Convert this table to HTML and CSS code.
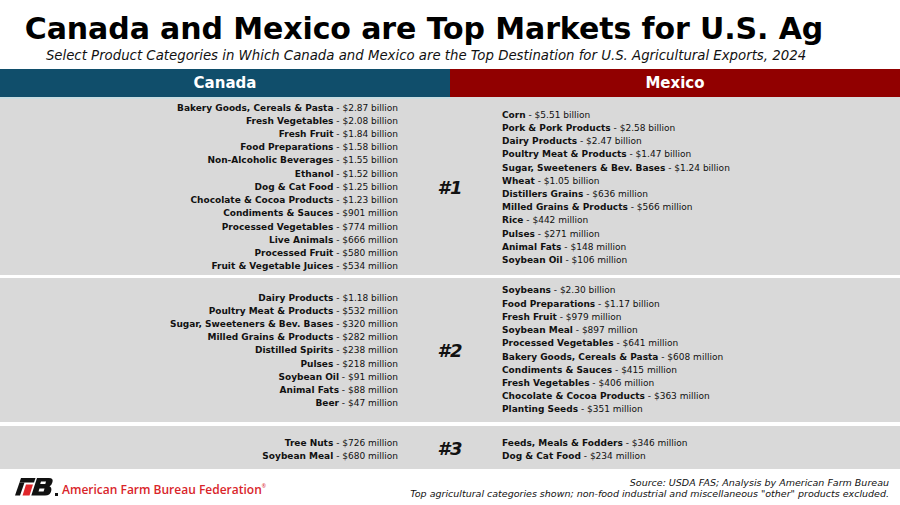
FILE: index.html
```html
<!DOCTYPE html>
<html>
<head>
<meta charset="utf-8">
<link rel="stylesheet" href="styles.css">
</head>
<body>
<div class="page">
  <h1 class="title">Canada and Mexico are Top Markets for U.S. Ag</h1>
  <p class="subtitle">Select Product Categories in Which Canada and Mexico are the Top Destination for U.S. Agricultural Exports, 2024</p>
  <div class="header">
    <div class="hcell canada">Canada</div>
    <div class="hcell mexico">Mexico</div>
  </div>
  <div class="sections">
    <div class="sec sec1">
      <ul class="col left">
        <li><b>Bakery Goods, Cereals &amp; Pasta</b> - $2.87 billion</li>
        <li><b>Fresh Vegetables</b> - $2.08 billion</li>
        <li><b>Fresh Fruit</b> - $1.84 billion</li>
        <li><b>Food Preparations</b> - $1.58 billion</li>
        <li><b>Non-Alcoholic Beverages</b> - $1.55 billion</li>
        <li><b>Ethanol</b> - $1.52 billion</li>
        <li><b>Dog &amp; Cat Food</b> - $1.25 billion</li>
        <li><b>Chocolate &amp; Cocoa Products</b> - $1.23 billion</li>
        <li><b>Condiments &amp; Sauces</b> - $901 million</li>
        <li><b>Processed Vegetables</b> - $774 million</li>
        <li><b>Live Animals</b> - $666 million</li>
        <li><b>Processed Fruit</b> - $580 million</li>
        <li><b>Fruit &amp; Vegetable Juices</b> - $534 million</li>
      </ul>
      <div class="rank">#1</div>
      <ul class="col right">
        <li><b>Corn</b> - $5.51 billion</li>
        <li><b>Pork &amp; Pork Products</b> - $2.58 billion</li>
        <li><b>Dairy Products</b> - $2.47 billion</li>
        <li><b>Poultry Meat &amp; Products</b> - $1.47 billion</li>
        <li><b>Sugar, Sweeteners &amp; Bev. Bases</b> - $1.24 billion</li>
        <li><b>Wheat</b> - $1.05 billion</li>
        <li><b>Distillers Grains</b> - $636 million</li>
        <li><b>Milled Grains &amp; Products</b> - $566 million</li>
        <li><b>Rice</b> - $442 million</li>
        <li><b>Pulses</b> - $271 million</li>
        <li><b>Animal Fats</b> - $148 million</li>
        <li><b>Soybean Oil</b> - $106 million</li>
      </ul>
    </div>
    <div class="sec sec2">
      <ul class="col left">
        <li><b>Dairy Products</b> - $1.18 billion</li>
        <li><b>Poultry Meat &amp; Products</b> - $532 million</li>
        <li><b>Sugar, Sweeteners &amp; Bev. Bases</b> - $320 million</li>
        <li><b>Milled Grains &amp; Products</b> - $282 million</li>
        <li><b>Distilled Spirits</b> - $238 million</li>
        <li><b>Pulses</b> - $218 million</li>
        <li><b>Soybean Oil</b> - $91 million</li>
        <li><b>Animal Fats</b> - $88 million</li>
        <li><b>Beer</b> - $47 million</li>
      </ul>
      <div class="rank">#2</div>
      <ul class="col right">
        <li><b>Soybeans</b> - $2.30 billion</li>
        <li><b>Food Preparations</b> - $1.17 billion</li>
        <li><b>Fresh Fruit</b> - $979 million</li>
        <li><b>Soybean Meal</b> - $897 million</li>
        <li><b>Processed Vegetables</b> - $641 million</li>
        <li><b>Bakery Goods, Cereals &amp; Pasta</b> - $608 million</li>
        <li><b>Condiments &amp; Sauces</b> - $415 million</li>
        <li><b>Fresh Vegetables</b> - $406 million</li>
        <li><b>Chocolate &amp; Cocoa Products</b> - $363 million</li>
        <li><b>Planting Seeds</b> - $351 million</li>
      </ul>
    </div>
    <div class="sec sec3">
      <ul class="col left">
        <li><b>Tree Nuts</b> - $726 million</li>
        <li><b>Soybean Meal</b> - $680 million</li>
      </ul>
      <div class="rank">#3</div>
      <ul class="col right">
        <li><b>Feeds, Meals &amp; Fodders</b> - $346 million</li>
        <li><b>Dog &amp; Cat Food</b> - $234 million</li>
      </ul>
    </div>
  </div>
  <footer class="footer">
    <div class="brand">
      <svg class="logo" viewBox="0 0 40 20" width="40" height="20" aria-hidden="true">
        <polygon points="7,1 21.5,1 20,5.5 5.5,5.5" fill="#111"/>
        <polygon points="5.5,5.5 10.5,5.5 6,18.5 1,18.5" fill="#111"/>
        <polygon points="12,7.5 19,7.5 15.5,18.5 8.5,18.5" fill="#e0262b"/>
        <path d="M23 1 H35 Q39.5 1 38.5 5 Q37.8 8 35.5 9.2 Q38 10.5 37.2 14 Q36.2 18.5 31 18.5 H17.3 Z" fill="#111"/>
        <polygon points="27,4.5 32,4.5 31.3,7 26.2,7" fill="#fff"/>
        <polygon points="25.5,11.5 30.5,11.5 29.6,14.5 24.5,14.5" fill="#fff"/>
      </svg>
      <span class="dot"></span>
      <span class="afbf">American Farm Bureau Federation<sup>®</sup></span>
    </div>
    <div class="notes">
      <p>Source: USDA FAS; Analysis by American Farm Bureau</p>
      <p>Top agricultural categories shown; non-food industrial and miscellaneous "other" products excluded.</p>
    </div>
  </footer>
</div>
</body>
</html>
```

FILE: styles.css
```css
html, body {
  margin: 0;
  padding: 0;
  background: #ffffff;
}
.page {
  width: 900px;
  height: 505px;
  overflow: hidden;
  font-family: "DejaVu Sans", Verdana, sans-serif;
  color: #111;
  display: flex;
  flex-direction: column;
}
.title {
  margin: 0;
  padding: 12px 52px 0 0;
  height: 34px;
  line-height: 34px;
  font-size: 30px;
  font-weight: bold;
  text-align: center;
  color: #000;
  letter-spacing: -0.1px;
}
.subtitle {
  margin: 0;
  padding-right: 48px;
  height: 23px;
  line-height: 20px;
  font-size: 13.3px;
  font-style: italic;
  text-align: center;
  color: #111;
}
.header {
  display: grid;
  grid-template-columns: 450px 450px;
  height: 30px;
}
.hcell {
  color: #fff;
  font-weight: bold;
  font-size: 15px;
  line-height: 28px;
  text-align: center;
}
.canada {
  background: #104e6b;
  border-bottom: 2px solid #c9dde2;
}
.mexico {
  background: #910000;
  border-bottom: 2px solid #d9d9d9;
}
.sections {
  display: flex;
  flex-direction: column;
}
.sec {
  display: grid;
  grid-template-columns: 1fr 104px 1fr;
  align-items: center;
  background: #d9d9d9;
}
.sec1 { height: 176px; }
.sec2 { height: 144px; margin-top: 3px; }
.sec3 { height: 43px; margin-top: 4px; }
.col {
  list-style: none;
  margin: 0;
  padding: 2px 0 0 0;
  font-size: 9px;
  line-height: 13.2px;
  white-space: nowrap;
  color: #111;
}
.sec1 .left {
  padding-top: 1px;
}
.sec3 .col {
  padding-top: 5px;
}
.col b {
  font-weight: bold;
}
.left {
  text-align: right;
}
.right {
  text-align: left;
}
.sec2 .right {
  padding-top: 1px;
}
.rank {
  text-align: center;
  font-size: 18px;
  font-weight: bold;
  font-style: italic;
  color: #111;
}
.sec3 .rank {
  padding-top: 2px;
}
.footer {
  flex: 1;
  display: flex;
  justify-content: space-between;
  align-items: center;
  padding: 0 11px 0 14px;
}
.brand {
  display: flex;
  align-items: flex-end;
}
.logo {
  display: block;
}
.dot {
  width: 3px;
  height: 3px;
  background: #111;
  margin: 0 0 1px 1px;
}
.afbf {
  font-family: "Open Sans", "Noto Sans", sans-serif;
  font-weight: 600;
  color: #d9252a;
  font-size: 12px;
  line-height: 14px;
  margin-left: 4px;
}
.afbf sup {
  font-size: 5px;
  vertical-align: 6px;
  font-weight: normal;
}
.notes {
  text-align: right;
  font-style: italic;
  font-size: 9.5px;
  line-height: 11.5px;
  padding-top: 2px;
}
.notes p {
  margin: 0;
}
```
